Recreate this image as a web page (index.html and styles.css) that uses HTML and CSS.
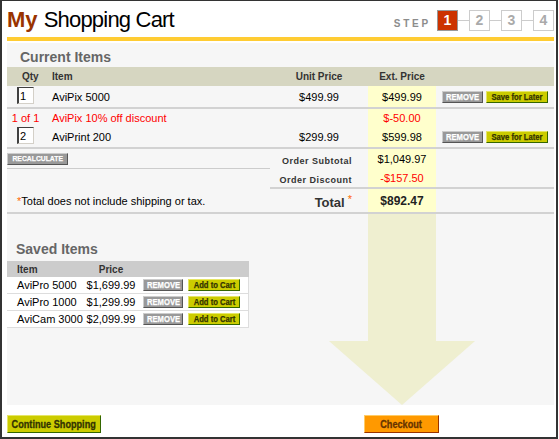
FILE: index.html
```html
<!DOCTYPE html>
<html>
<head>
<meta charset="utf-8">
<title>My Shopping Cart</title>
<link rel="stylesheet" href="styles.css">
</head>
<body>
<div class="frame">
  <div class="header">
    <h1 class="title"><span class="my">My</span> <span class="sc">Shopping Cart</span></h1>
    <div class="steps">
      <span class="step-label">STEP</span>
      <span class="step active">1</span><span class="conn"></span>
      <span class="step">2</span><span class="conn"></span>
      <span class="step">3</span><span class="conn"></span>
      <span class="step">4</span>
    </div>
  </div>
  <div class="rule"></div>
  <div class="panel">
    <svg class="arrow" width="146" height="191" viewBox="0 0 146 191"><path d="M39 0H107V127H146L73 191L0 127H39Z" fill="#efefd0"/></svg>
    <h2 class="section">Current Items</h2>
    <table class="cart">
      <colgroup><col class="c-qty"><col class="c-item"><col class="c-unit"><col class="c-ext"><col class="c-act"></colgroup>
      <thead>
        <tr><th class="h-qty">Qty</th><th class="h-item">Item</th><th>Unit Price</th><th>Ext. Price</th><th></th></tr>
      </thead>
      <tbody>
        <tr class="item">
          <td class="qty"><input class="qty-in" type="text" value="1"></td>
          <td class="name">AviPix 5000</td>
          <td class="unit">$499.99</td>
          <td class="ext">$499.99</td>
          <td><div class="acts"><button class="btn sm gray w-rm"><span class="bt">REMOVE</span></button><button class="btn sm yellow w-save"><span class="bt">Save for Later</span></button></div></td>
        </tr>
        <tr class="disc">
          <td class="qty red">1 of 1</td>
          <td class="name red">AviPix 10% off discount</td>
          <td></td>
          <td class="ext red">$-50.00</td>
          <td></td>
        </tr>
        <tr class="item">
          <td class="qty"><input class="qty-in" type="text" value="2"></td>
          <td class="name">AviPrint 200</td>
          <td class="unit">$299.99</td>
          <td class="ext">$599.98</td>
          <td><div class="acts"><button class="btn sm gray w-rm"><span class="bt">REMOVE</span></button><button class="btn sm yellow w-save"><span class="bt">Save for Later</span></button></div></td>
        </tr>
        <tr class="sub1">
          <td colspan="2" class="recalc"><button class="btn sm gray w-recalc"><span class="bt">RECALCULATE</span></button></td>
          <td class="label lb1">Order Subtotal</td>
          <td class="ext">$1,049.97</td>
          <td></td>
        </tr>
        <tr class="sub2">
          <td colspan="2" class="blank"></td>
          <td class="label lb2">Order Discount</td>
          <td class="ext red">-$157.50</td>
          <td></td>
        </tr>
        <tr class="total">
          <td colspan="2" class="note"><span class="ast">*</span>Total does not include shipping or tax.</td>
          <td class="total-label">Total<span class="ast up">*</span></td>
          <td class="ext total-val">$892.47</td>
          <td></td>
        </tr>
      </tbody>
    </table>

    <h2 class="section saved-h">Saved Items</h2>
    <table class="saved">
      <colgroup><col class="s-item"><col class="s-price"><col class="s-act"></colgroup>
      <thead>
        <tr><th class="h-sitem">Item</th><th>Price</th><th></th></tr>
      </thead>
      <tbody>
        <tr><td class="sname">AviPro 5000</td><td class="sprice">$1,699.99</td><td class="sact"><div class="sacts"><button class="btn sm gray w-srm"><span class="bt">REMOVE</span></button><button class="btn sm yellow w-add"><span class="bt">Add to Cart</span></button></div></td></tr>
        <tr><td class="sname">AviPro 1000</td><td class="sprice">$1,299.99</td><td class="sact"><div class="sacts"><button class="btn sm gray w-srm"><span class="bt">REMOVE</span></button><button class="btn sm yellow w-add"><span class="bt">Add to Cart</span></button></div></td></tr>
        <tr><td class="sname">AviCam 3000</td><td class="sprice">$2,099.99</td><td class="sact"><div class="sacts"><button class="btn sm gray w-srm"><span class="bt">REMOVE</span></button><button class="btn sm yellow w-add"><span class="bt">Add to Cart</span></button></div></td></tr>
      </tbody>
    </table>
  </div>
  <div class="footer">
    <button class="btn big yellow w-cont"><span class="bt">Continue Shopping</span></button>
    <button class="btn big orange w-check"><span class="bt">Checkout</span></button>
  </div>
</div>
</body>
</html>
```
FILE: styles.css
```css
* { box-sizing: border-box; }
html, body { margin: 0; padding: 0; background: #fff; }
body {
  font-family: "Liberation Sans", Arial, sans-serif;
  font-size: 11px;
  color: #000;
}
.frame {
  width: 558px;
  height: 439px;
  border-style: solid;
  border-color: #333;
  border-width: 1px 2px 2px 2px;
  padding: 0 2px 0 5px;
}
.header {
  height: 36px;
  display: flex;
  justify-content: space-between;
  align-items: flex-start;
}
.title {
  margin: 6px 0 0 0;
  font-size: 22px;
  line-height: 26px;
  font-weight: normal;
  white-space: nowrap;
  color: #000;
}
.my { font-weight: bold; color: #993300; }
.sc { letter-spacing: -0.8px; }
.steps {
  display: flex;
  align-items: center;
  margin-top: 9px;
}
.step-label {
  align-self: flex-start;
  margin: 8px 6px 0 0;
  font-size: 10px;
  line-height: 12px;
  font-weight: bold;
  letter-spacing: 2.8px;
  color: #8c8c8c;
}
.step {
  width: 21px;
  height: 21px;
  border: 1px solid #cccccc;
  background: #fff;
  color: #aaaaaa;
  font-size: 14px;
  font-weight: bold;
  line-height: 19px;
  text-align: center;
}
.step.active { background: #cc3300; border-color: #999999; color: #fff; }
.conn { width: 11px; height: 1px; background: #cccccc; }
.rule { height: 4px; background: #ffcc33; }
.panel {
  position: relative;
  height: 362px;
  margin-top: 2px;
  background: #f6f6f6;
}
.arrow { position: absolute; left: 322px; top: 171px; display: block; }
.section {
  margin: 0;
  padding: 6px 0 2px 13px;
  font-size: 14px;
  line-height: 16px;
  font-weight: bold;
  color: #666666;
}
.saved-h { padding: 27px 0 4px 9px; }

/* cart table */
.cart {
  width: 547px;
  border-collapse: separate;
  border-spacing: 0;
  table-layout: fixed;
}
.c-qty { width: 40px; }
.c-item { width: 223px; }
.c-unit { width: 98px; }
.c-ext { width: 68px; }
.c-act { width: 118px; }
.cart th {
  height: 19px;
  padding: 0;
  background: #d6d6c1;
  font-size: 10px;
  font-weight: bold;
  color: #333;
  text-align: center;
  vertical-align: middle;
}
.cart th.h-qty { text-align: left; padding-left: 15px; }
.cart th.h-item { text-align: left; padding-left: 5px; }
.cart td {
  padding: 0;
  vertical-align: middle;
  white-space: nowrap;
}
.cart .item td { height: 23px; border-bottom: 2px solid #d2d2d2; }
.cart .disc td { height: 17px; }
.cart .sub1 td { height: 20px; }
.cart .sub2 td { height: 20px; border-bottom: 2px solid #d2d2d2; }
.cart .sub2 td.blank { border-bottom: 0; }
.cart .sub1 td.recalc { border-bottom: 1px solid #cccccc; }
.cart .total td { height: 25px; border-bottom: 2px solid #d2d2d2; }
.qty { text-align: center; padding-right: 3px !important; }
.qty-in {
  display: block;
  width: 17px;
  height: 17px;
  margin: 0 0 2px 10px;
  padding: 0 0 0 1px;
  border-style: solid;
  border-width: 1px 1px 1px 2px;
  border-color: #404040 #d4d0c8 #d4d0c8 #404040;
  background: #fff;
  font-family: "Liberation Sans", Arial, sans-serif;
  font-size: 11px;
  line-height: 15px;
  color: #000;
  outline: none;
}
.name { padding-left: 5px !important; }
.unit { text-align: center; }
.ext { text-align: center; background: #ffffcc; }
.red { color: #ff0000; }
.acts {
  display: flex;
  align-items: center;
  gap: 3px;
  padding-left: 6px;
}
.label {
  text-align: right;
  vertical-align: bottom !important;
  padding-right: 16px !important;
  font-size: 9px;
  line-height: 10px;
  font-weight: bold;
  letter-spacing: 0.5px;
  color: #333;
}
.lb1 { padding-bottom: 3px !important; }
.lb2 { padding-bottom: 2px !important; }
.note { padding-left: 10px !important; color: #000; }
.ast { color: #ff6600; }
.up { vertical-align: 4px; margin-left: 3px; font-size: 11px; font-weight: normal; }
.total-label {
  text-align: right;
  vertical-align: bottom !important;
  padding: 0 16px 2px 0 !important;
  font-size: 13px;
  line-height: 15px;
  font-weight: bold;
  color: #333;
}
.total-val { font-size: 12px; font-weight: bold; color: #222; }

/* saved table */
.saved {
  width: 242px;
  border-collapse: separate;
  border-spacing: 0;
  table-layout: fixed;
}
.s-item { width: 75px; }
.s-price { width: 58px; }
.s-act { width: 109px; }
.saved th {
  height: 16px;
  padding: 0;
  background: #cccccc;
  font-size: 10px;
  font-weight: bold;
  color: #333;
  text-align: center;
  vertical-align: middle;
}
.saved th.h-sitem { text-align: left; padding-left: 10px; }
.saved td {
  height: 17px;
  padding: 0;
  background: #fff;
  border-bottom: 1px solid #dddddd;
  vertical-align: middle;
  white-space: nowrap;
}
.saved td.sact { border-right: 1px solid #dddddd; }
.sname { padding-left: 10px !important; }
.sprice { text-align: center; }
.sacts { display: flex; align-items: center; gap: 5px; padding-left: 3px; }

/* buttons */
.btn {
  display: flex;
  justify-content: center;
  align-items: center;
  margin: 0;
  padding: 0;
  border: 1px solid;
  font-family: "Liberation Sans", Arial, sans-serif;
  font-weight: bold;
  white-space: nowrap;
  overflow: visible;
  cursor: pointer;
}
.bt {
  display: inline-block;
  flex: none;
  transform: scaleX(0.85);
  -webkit-text-stroke: 0.25px currentColor;
}
.btn.sm { height: 12px; font-size: 9px; line-height: 10px; }
.btn.big { height: 18px; font-size: 11px; line-height: 16px; }
.btn.big .bt { transform: scaleX(0.83); -webkit-text-stroke: 0.3px currentColor; }
.w-recalc { font-size: 8px !important; }
.gray { background: #999999; color: #fff; border-color: #cccccc #555555 #555555 #cccccc; }
.yellow { background: #cccc00; color: #333300; border-color: #e6e666 #336600 #336600 #e6e666; }
.orange { background: #ff9900; color: #663300; border-color: #ffcc66 #993300 #993300 #ffcc66; }
.w-rm { width: 41px; }
.w-save { width: 62px; }
.w-recalc { width: 61px; }
.w-srm { width: 40px; }
.w-add { width: 52px; }
.w-cont { width: 94px; }
.w-check { width: 75px; margin-left: 263px; }
.footer { display: flex; align-items: flex-start; padding-top: 10px; }
```
